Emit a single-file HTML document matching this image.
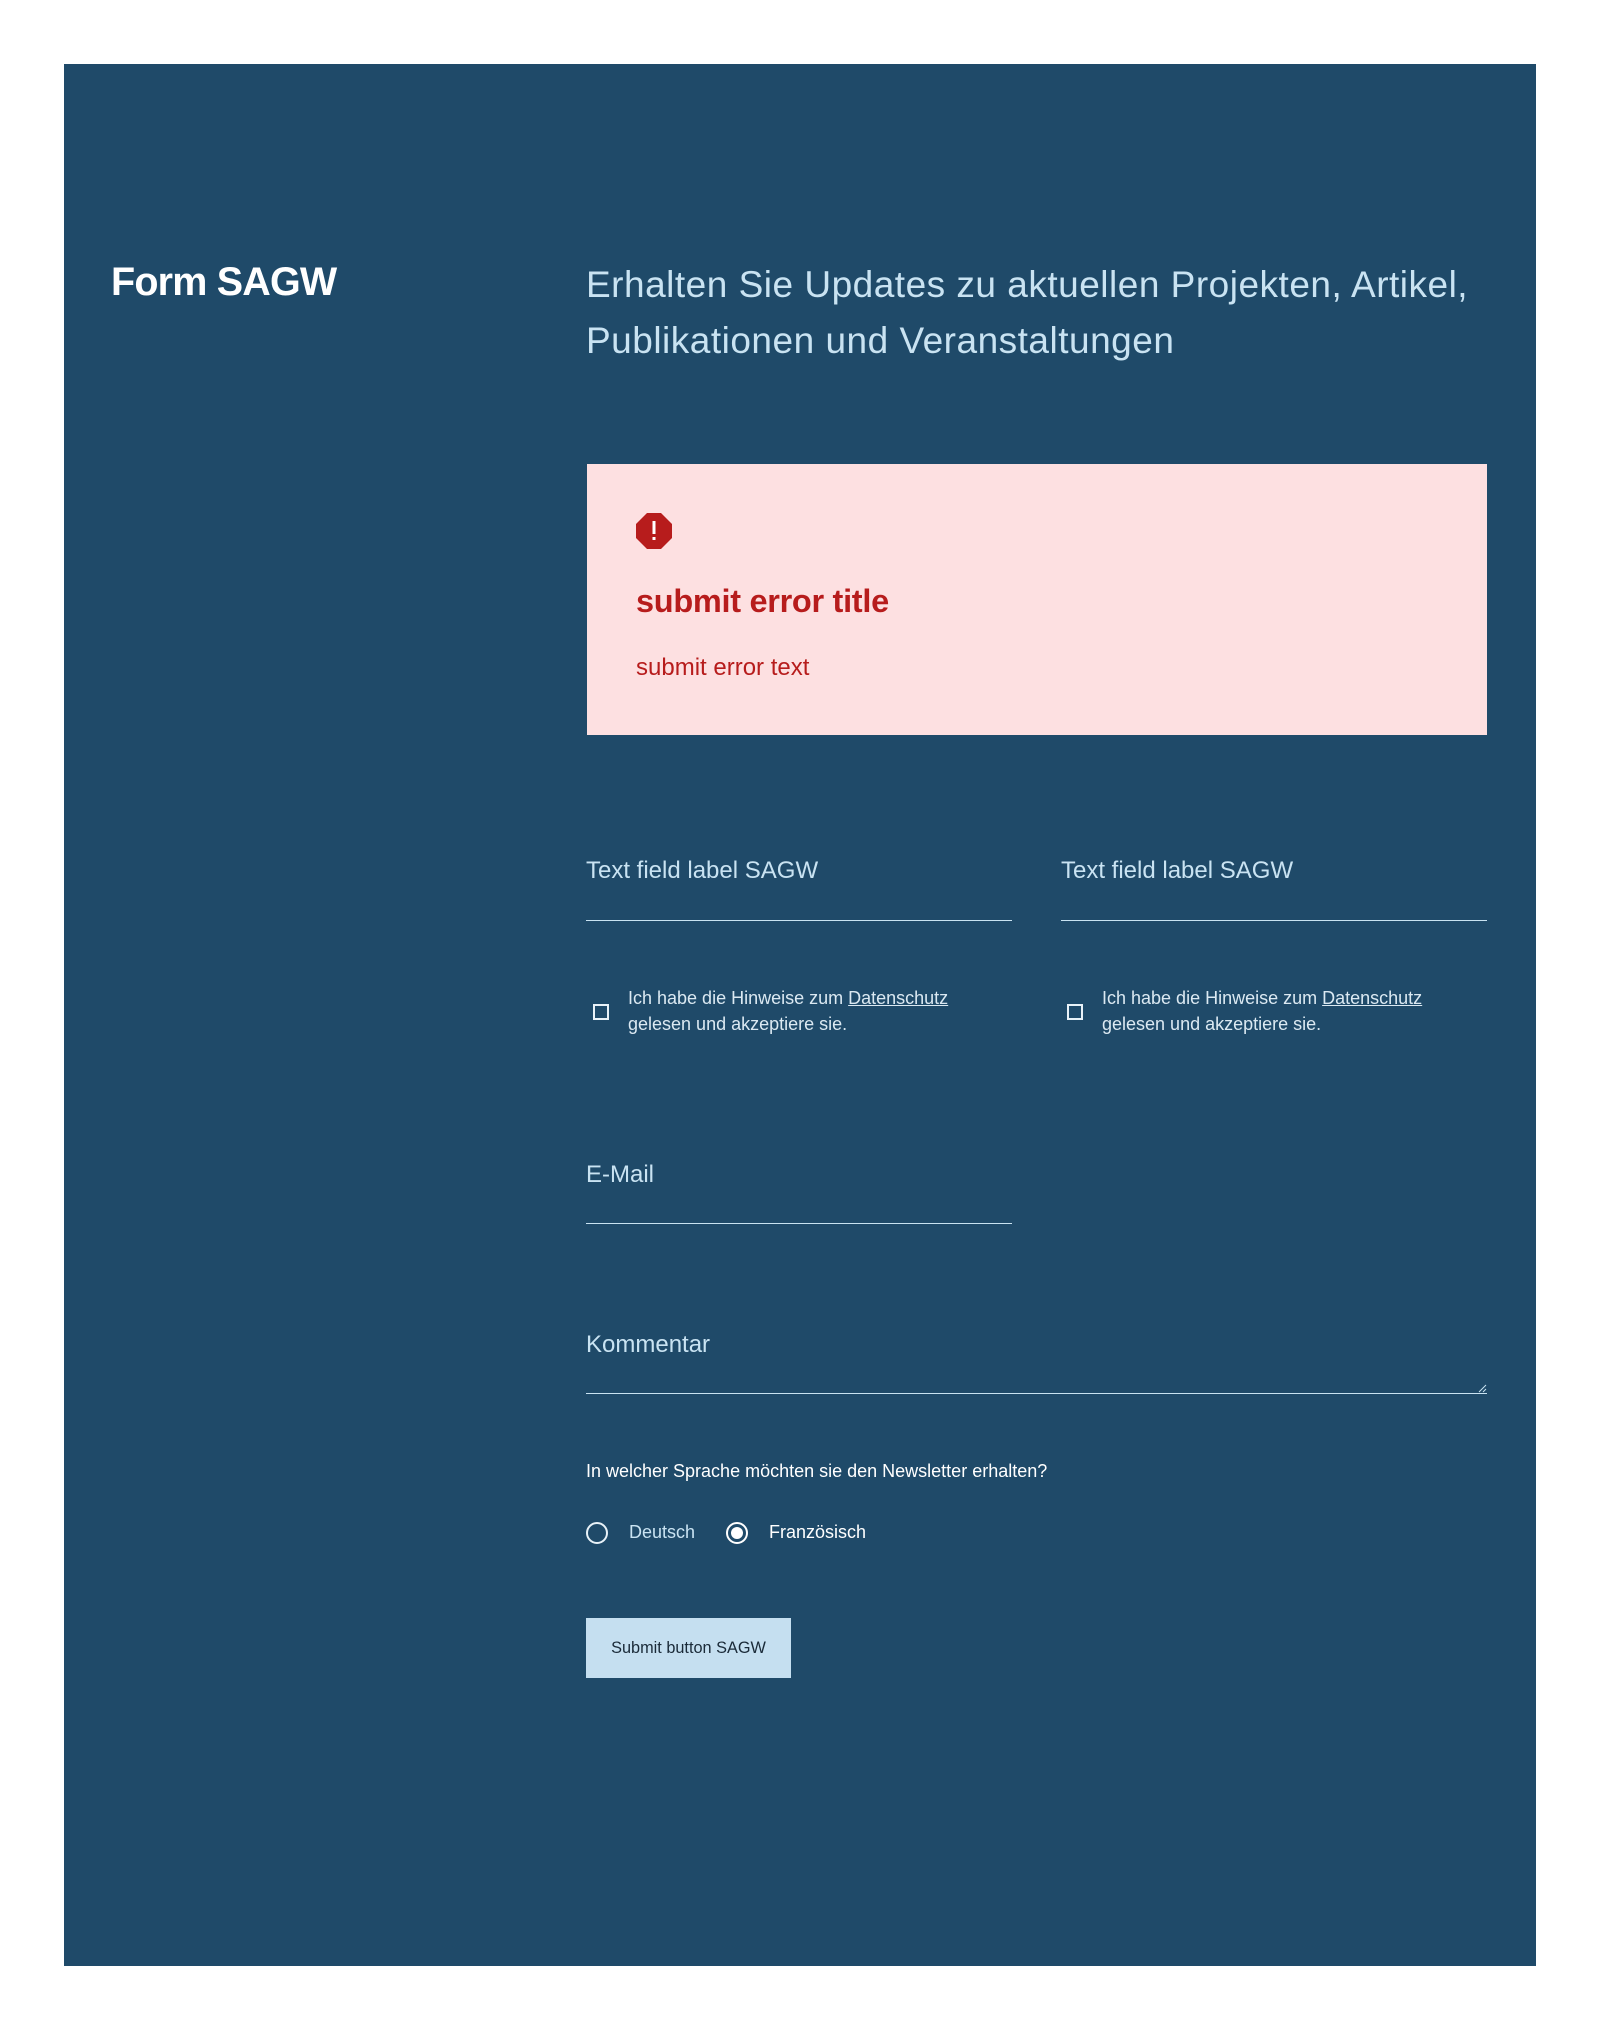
<!DOCTYPE html>
<html><head><meta charset="utf-8"><style>
*{margin:0;padding:0;box-sizing:border-box}
body{width:1600px;height:2030px;background:#fff;font-family:"Liberation Sans",Arial,sans-serif;position:relative;overflow:hidden}
.panel{position:absolute;left:64px;top:64px;width:1472px;height:1902px;background:#1f4a69}
.a{position:absolute;white-space:nowrap}
.lbl{color:#c9e3f2;font-size:24px}
.line{position:absolute;height:1px;background:#c9e3f2}
.cb{position:absolute;width:16px;height:16px;border:2px solid #e8f2f8}
.ct{color:#dbe9f2;font-size:18px;line-height:26px}
.ct u{color:#dbe9f2}
</style></head><body>
<div class="panel"></div>
<div class="a" style="left:111px;top:260px;font-size:39.5px;font-weight:bold;color:#fff;letter-spacing:-0.8px">Form SAGW</div>
<div class="a" style="left:586px;top:257px;font-size:37px;line-height:56px;color:#c9e3f2;letter-spacing:0.5px">Erhalten Sie Updates zu aktuellen Projekten, Artikel,<br>Publikationen und Veranstaltungen</div>
<div style="position:absolute;left:587px;top:464px;width:900px;height:271px;background:#fde0e1"></div>
<svg style="position:absolute;left:636px;top:513px" width="36" height="36" viewBox="0 0 36 36"><polygon points="11,0 25,0 36,11 36,25 25,36 11,36 0,25 0,11" fill="#b71c1c"/><rect x="16.5" y="8" width="3" height="13" fill="#fff"/><rect x="16.5" y="24" width="3" height="3" fill="#fff"/></svg>
<div class="a" style="left:636px;top:583px;font-size:32.5px;font-weight:bold;color:#b71c1c;letter-spacing:-0.3px">submit error title</div>
<div class="a" style="left:636px;top:654px;font-size:24px;color:#b71c1c">submit error text</div>
<div class="a lbl" style="left:586px;top:857px">Text field label SAGW</div>
<div class="a lbl" style="left:1061px;top:857px">Text field label SAGW</div>
<div class="line" style="left:586px;top:920px;width:426px"></div>
<div class="line" style="left:1061px;top:920px;width:426px"></div>
<div class="cb" style="left:593px;top:1004px"></div>
<div class="a ct" style="left:628px;top:985px">Ich habe die Hinweise zum <u>Datenschutz</u><br>gelesen und akzeptiere sie.</div>
<div class="cb" style="left:1067px;top:1004px"></div>
<div class="a ct" style="left:1102px;top:985px">Ich habe die Hinweise zum <u>Datenschutz</u><br>gelesen und akzeptiere sie.</div>
<div class="a lbl" style="left:586px;top:1161px">E-Mail</div>
<div class="line" style="left:586px;top:1223px;width:426px"></div>
<div class="a lbl" style="left:586px;top:1331px">Kommentar</div>
<div class="line" style="left:586px;top:1393px;width:901px"></div>
<svg style="position:absolute;left:1478px;top:1384px" width="9" height="9"><path d="M8 1L1 8M8 5L5 8" stroke="#c9e3f2" stroke-width="1"/></svg>
<div class="a" style="left:586px;top:1461px;font-size:18px;color:#fff">In welcher Sprache möchten sie den Newsletter erhalten?</div>
<div style="position:absolute;left:586px;top:1522px;width:22px;height:22px;border:2px solid #e8f2f8;border-radius:50%"></div>
<div class="a" style="left:629px;top:1522px;font-size:18px;color:#c9e3f2">Deutsch</div>
<div style="position:absolute;left:726px;top:1522px;width:22px;height:22px;border:2px solid #fff;border-radius:50%"><div style="position:absolute;left:3px;top:3px;width:12px;height:12px;background:#fff;border-radius:50%"></div></div>
<div class="a" style="left:769px;top:1522px;font-size:18px;color:#fff">Französisch</div>
<div style="position:absolute;left:586px;top:1618px;width:205px;height:60px;background:#c5dff0;color:#1a2a38;font-size:16.3px;line-height:60px;text-align:center">Submit button SAGW</div>
</body></html>
